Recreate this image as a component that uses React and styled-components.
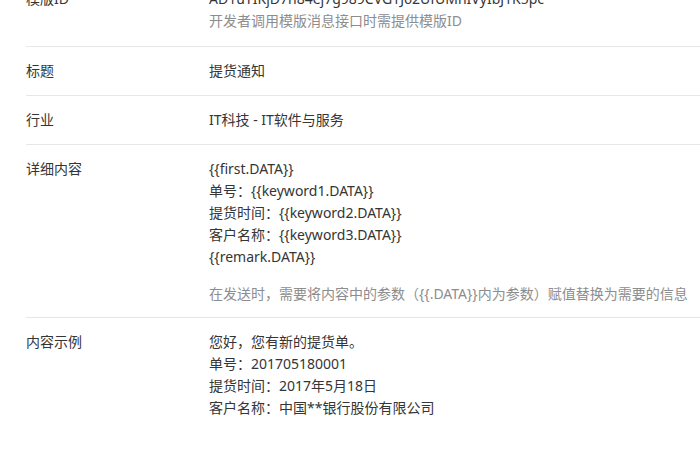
import styled, { createGlobalStyle } from "styled-components";

const GlobalStyle = createGlobalStyle`
    body {
        margin: 0;
        background: #fff;
        font-family: "Microsoft YaHei", "Noto Sans", "Noto Sans CJK SC", sans-serif;
        font-size: 14px;
        color: #353535;
        overflow: hidden;
    }
`;

const Table = styled.div`
    margin-top: -25px;
    padding-left: 26px;
    width: 720px;
`;

const Row = styled.div`
    display: flex;
    padding: 13px 0 ${(p) => p.$bottom || 13}px;
    border-bottom: ${(p) => (p.$last ? "none" : "1px solid #e7e7e7")};
    line-height: 22px;
`;

const Label = styled.div`
    width: 183px;
    flex-shrink: 0;
`;

const Value = styled.div`
    flex: 1;
`;

const Line = styled.div`
    white-space: nowrap;
`;

const Hint = styled.div`
    color: #8d8d8d;
    margin-top: ${(p) => p.$gap || 0}px;
    white-space: nowrap;
`;

const rows = [
    {
        label: "模版ID",
        lines: ["AD1uYIKjD7n84ej7g989CVG1J62UfUMnIVyIbJ1K5pc"],
        hint: "开发者调用模版消息接口时需提供模版ID",
        bottom: 14,
    },
    { label: "标题", lines: ["提货通知"] },
    { label: "行业", lines: ["IT科技 - IT软件与服务"] },
    {
        label: "详细内容",
        lines: [
            "{{first.DATA}}",
            "单号：{{keyword1.DATA}}",
            "提货时间：{{keyword2.DATA}}",
            "客户名称：{{keyword3.DATA}}",
            "{{remark.DATA}}",
        ],
        hint: "在发送时，需要将内容中的参数（{{.DATA}}内为参数）赋值替换为需要的信息",
        gap: 15,
        bottom: 12,
    },
    {
        label: "内容示例",
        lines: [
            "您好，您有新的提货单。",
            "单号：201705180001",
            "提货时间：2017年5月18日",
            "客户名称：中国**银行股份有限公司",
        ],
        last: true,
    },
];

export default function App() {
    return (
        <>
            <GlobalStyle />
            <Table>
                {rows.map((r) => (
                    <Row key={r.label} $bottom={r.bottom} $last={r.last}>
                        <Label>{r.label}</Label>
                        <Value>
                            {r.lines.map((l) => (
                                <Line key={l}>{l}</Line>
                            ))}
                            {r.hint && <Hint $gap={r.gap}>{r.hint}</Hint>}
                        </Value>
                    </Row>
                ))}
            </Table>
        </>
    );
}
